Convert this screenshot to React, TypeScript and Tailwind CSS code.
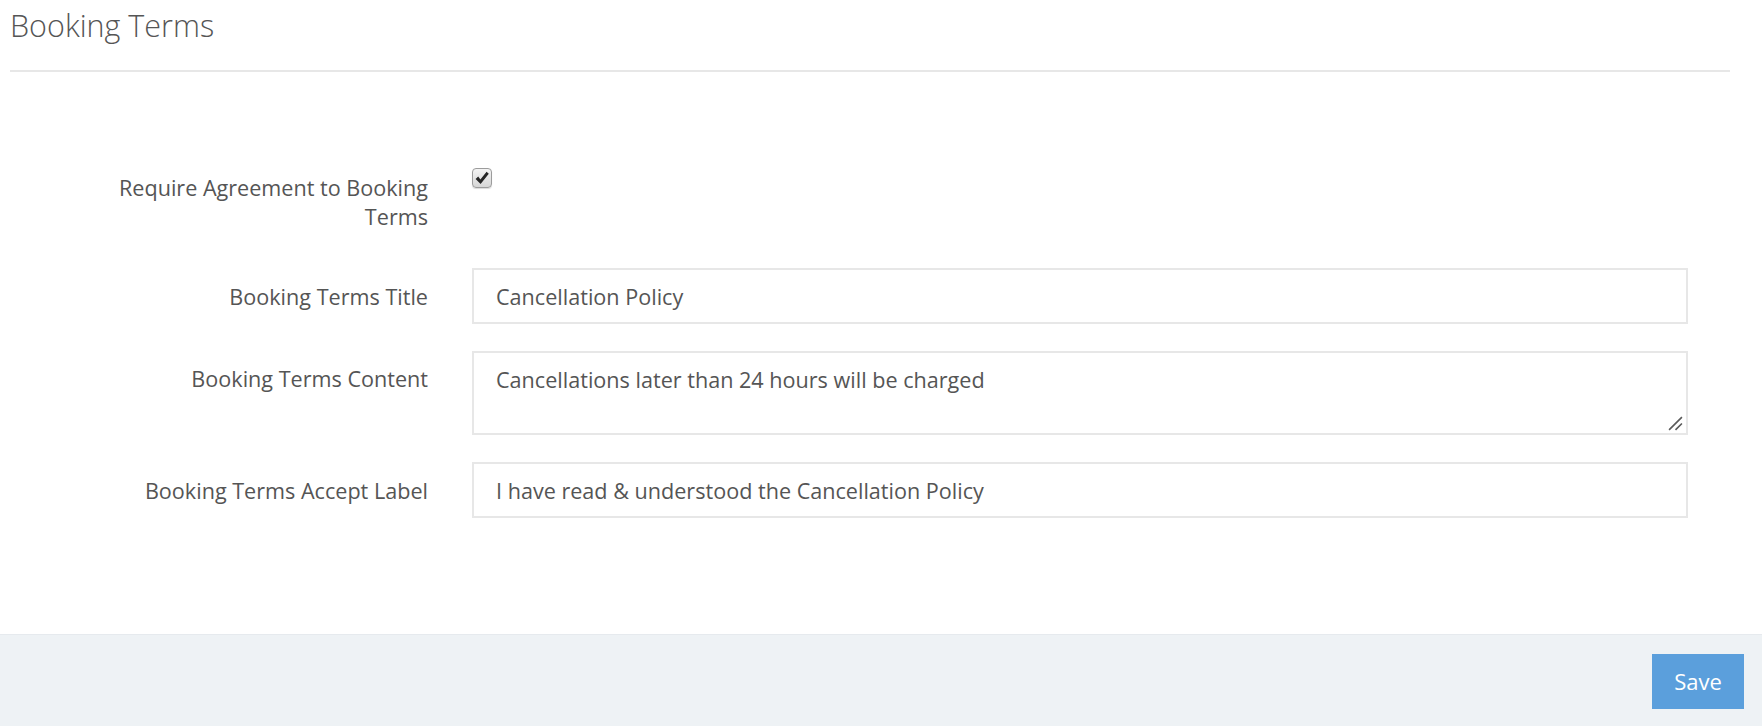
import { useState } from 'react';

const FIELDS = [
  { id: 'title', label: 'Booking Terms Title', value: 'Cancellation Policy' },
  { id: 'accept', label: 'Booking Terms Accept Label', value: 'I have read & understood the Cancellation Policy' },
];

function CheckBox({ checked, onChange }: { checked: boolean; onChange: () => void }) {
  return (
    <button
      type="button"
      onClick={onChange}
      className="w-[20px] h-[20px] rounded-[4px] border border-[#9c9c9c] bg-gradient-to-b from-[#f4f4f4] to-[#d6d6d6] shadow-[0_1px_1px_rgba(0,0,0,0.15)] flex items-center justify-center"
    >
      {checked && (
        <svg viewBox="0 0 16 16" className="w-[16px] h-[16px]">
          <path d="M1.6 9 L4.2 6.6 L6.4 9.4 L12.6 1.8 L14.8 3.8 L6.6 14 Z" fill="#262626" />
        </svg>
      )}
    </button>
  );
}

export default function App() {
  const [required, setRequired] = useState(true);
  const [title, setTitle] = useState(FIELDS[0].value);
  const [content, setContent] = useState('Cancellations later than 24 hours will be charged');
  const [accept, setAccept] = useState(FIELDS[1].value);

  return (
    <div className="min-h-screen flex flex-col bg-white text-[#555] font-['Open_Sans',sans-serif]">
      <div className="flex-1 pl-[10px] pr-[32px]">
        <h1 className="pt-[7px] text-[30.5px] leading-[36px] font-light text-[#555]">Booking Terms</h1>
        <div className="mt-[27px] border-b-2 border-[#e7e7e7]" />

        <form className="mt-[96px] pr-[42px]" onSubmit={(e) => e.preventDefault()}>
          <div className="grid grid-cols-[418px_1fr] gap-x-[44px] mb-[37px]">
            <label className="pl-[78px] pt-[5px] text-right text-[21.6px] leading-[29px]">
              Require Agreement to Booking Terms
            </label>
            <div>
              <CheckBox checked={required} onChange={() => setRequired(!required)} />
            </div>
          </div>

          <div className="grid grid-cols-[418px_1fr] gap-x-[44px] mb-[27px]">
            <label className="pl-[78px] pt-[14px] text-right text-[21.6px] leading-[29px]">
              {FIELDS[0].label}
            </label>
            <input
              value={title}
              onChange={(e) => setTitle(e.target.value)}
              className="h-[56px] w-full border-2 border-[#e7e7e7] px-[22px] text-[21.6px] text-[#555] outline-none"
            />
          </div>

          <div className="grid grid-cols-[418px_1fr] gap-x-[44px] mb-[27px]">
            <label className="pl-[78px] pt-[13px] text-right text-[21.6px] leading-[29px]">
              Booking Terms Content
            </label>
            <div className="relative">
              <textarea
                value={content}
                onChange={(e) => setContent(e.target.value)}
                className="block h-[84px] w-full resize-none border-2 border-[#e7e7e7] px-[22px] pt-[12px] text-[21.6px] leading-[29px] text-[#555] outline-none"
              />
              <svg viewBox="0 0 14 14" className="absolute right-[5px] bottom-[4px] w-[15px] h-[15px] pointer-events-none">
                <path d="M1 13 L13 1 M7 13 L13 7" stroke="#5a5a5a" strokeWidth="1.5" />
              </svg>
            </div>
          </div>

          <div className="grid grid-cols-[418px_1fr] gap-x-[44px]">
            <label className="pl-[78px] pt-[14px] text-right text-[21.6px] leading-[29px]">
              {FIELDS[1].label}
            </label>
            <input
              value={accept}
              onChange={(e) => setAccept(e.target.value)}
              className="h-[56px] w-full border-2 border-[#e7e7e7] px-[22px] text-[21.6px] text-[#555] outline-none"
            />
          </div>
        </form>
      </div>

      <div className="h-[92px] border-t border-[#e6eaee] bg-[#eef2f5] flex justify-end items-start pt-[19px] pr-[18px]">
        <button className="w-[92px] h-[55px] bg-[#5b9fdc] text-white text-[22px] leading-[29px]">Save</button>
      </div>
    </div>
  );
}
